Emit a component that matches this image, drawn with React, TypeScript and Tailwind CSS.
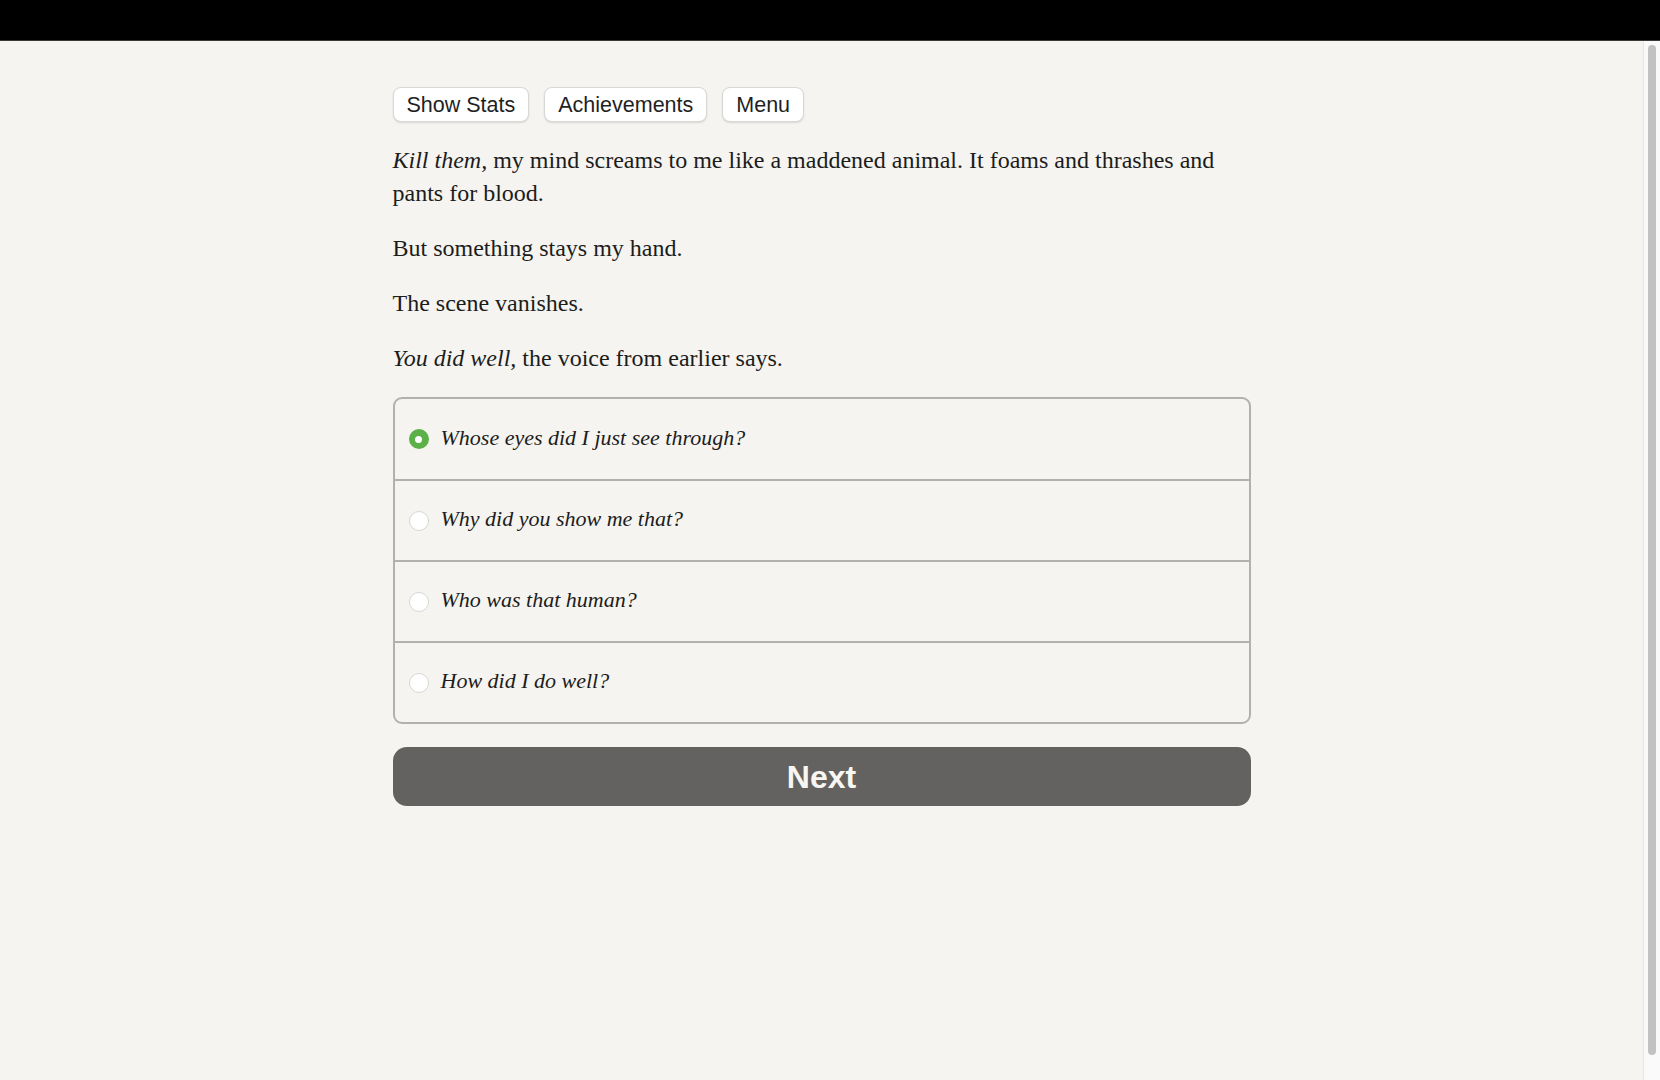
import React, { useState } from "react";

const serif = "font-['Liberation_Serif','Times_New_Roman',serif]";
const sans = "font-['Liberation_Sans',Arial,sans-serif]";

const choices = [
  "Whose eyes did I just see through?",
  "Why did you show me that?",
  "Who was that human?",
  "How did I do well?",
];

const TopButton: React.FC<{ label: string }> = ({ label }) => (
  <button
    className={`${sans} h-[35px] px-[13px] pt-[3px] rounded-[8px] border border-[#d8d8d6] bg-white text-[21.5px] leading-none text-[#1f1f1f] shadow-[0_1px_2px_rgba(0,0,0,0.12)]`}
  >
    {label}
  </button>
);

const App: React.FC = () => {
  const [picked, setPicked] = useState(0);

  return (
    <div className="h-screen overflow-hidden flex flex-col bg-[#f5f4f0]">
      {/* window chrome strip */}
      <div className="h-[41px] shrink-0 bg-black border-b border-[#3a3a3a]" />

      <div className="flex flex-1 min-h-0">
        <main className="flex-1">
          <div className="w-[858px] mx-auto pt-[46px]">
            <div className="flex gap-[15px]">
              <TopButton label="Show Stats" />
              <TopButton label="Achievements" />
              <TopButton label="Menu" />
            </div>

            <div className={`${serif} text-[24px] leading-[33px] text-[#1c1c1c]`}>
              <p className="mt-[22px]">
                <i>Kill them, </i>my mind screams to me like a maddened animal. It foams and
                thrashes and pants for blood.
              </p>
              <p className="mt-[22px]">But something stays my hand.</p>
              <p className="mt-[22px]">The scene vanishes.</p>
              <p className="mt-[22px]">
                <i>You did well, </i>the voice from earlier says.
              </p>
            </div>

            <div className="mt-[22px] border-2 border-[#b1b1b0] rounded-[9px] overflow-hidden">
              {choices.map((c, i) => (
                <label
                  key={c}
                  onClick={() => setPicked(i)}
                  className={`flex items-center pl-[14px] gap-[12px] cursor-pointer ${
                    i > 0 ? "border-t-2 border-[#b1b1b0] h-[81px]" : "h-[80px]"
                  }`}
                >
                  {picked === i ? (
                    <span className="w-5 h-5 rounded-full bg-[#5bb047] flex items-center justify-center">
                      <span className="w-[7px] h-[7px] rounded-full bg-white" />
                    </span>
                  ) : (
                    <span className="w-5 h-5 rounded-full bg-white border border-[#d6d6d4]" />
                  )}
                  <span className={`${serif} italic text-[22px] pb-[4px] text-[#1c1c1c]`}>{c}</span>
                </label>
              ))}
            </div>

            <button
              className={`${sans} mt-[23px] w-full h-[59px] rounded-[14px] bg-[#636260] text-[32px] font-bold text-[#f7f6f2]`}
            >
              Next
            </button>
          </div>
        </main>

        {/* scrollbar */}
        <div className="w-[17px] shrink-0 bg-[#fafafa] border-l border-[#e6e6e6] pt-[4px] pb-[25px] pl-[4px] pr-[4px]">
          <div className="h-full w-[8px] rounded-full bg-[#c2c2c2]" />
        </div>
      </div>
    </div>
  );
};

export default App;
